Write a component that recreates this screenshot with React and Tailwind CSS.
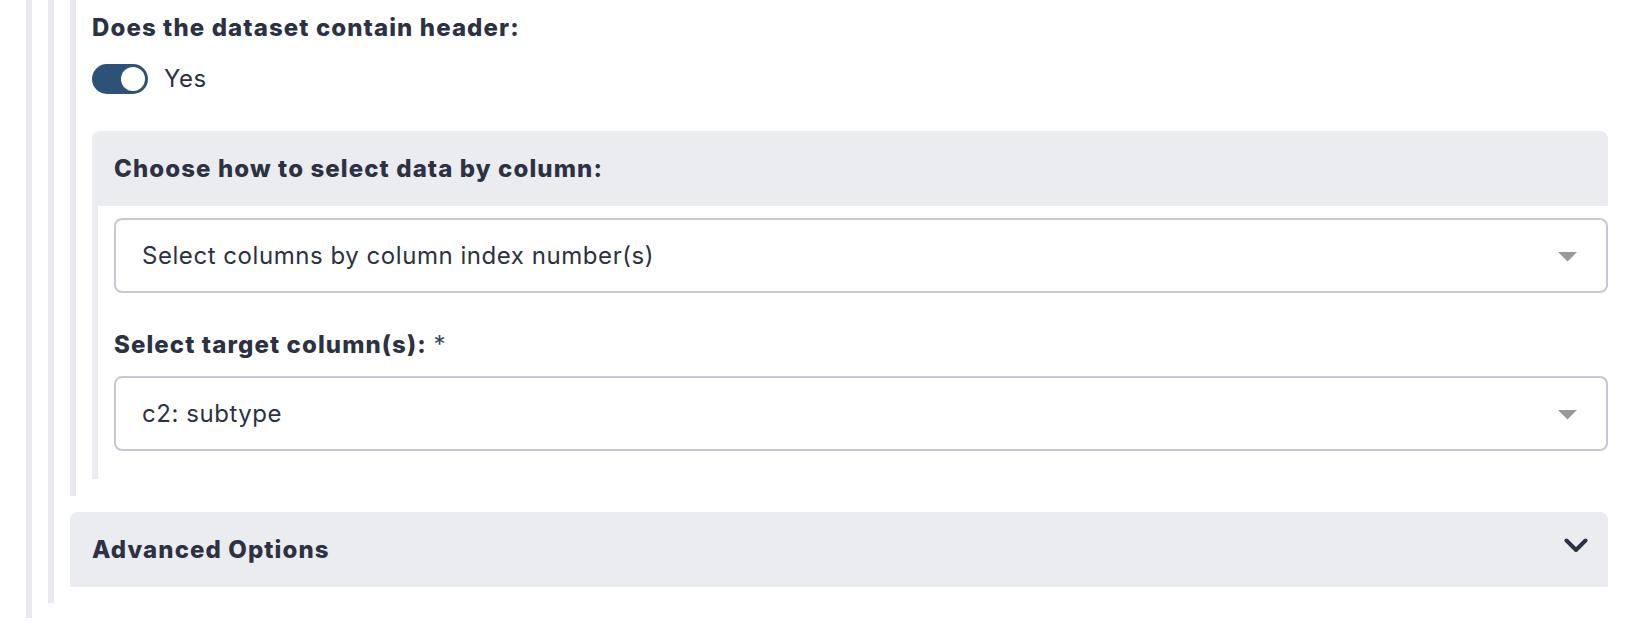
const SelectBox = ({ value }) => (
  <div className="flex h-[75px] items-center justify-between rounded-lg border-2 border-[#c5c9d3] bg-white pl-[26px] pr-[29px]">
    <span className="text-[24px] leading-[30px] tracking-[0.55px]">{value}</span>
    <svg width="19" height="10" viewBox="0 0 19 10" className="mt-[3px]">
      <path d="M0 0 L19 0 L9.5 9.5 Z" fill="#999999" />
    </svg>
  </div>
);

const App = () => {
  return (
    <div className="min-h-screen bg-white font-['Inter',sans-serif] text-[#2c3143]">
      <div className="pl-[26px] pr-[30px]">
        <div className="border-l-[6px] border-[#e8e9ee] pl-4 pb-[15px]">
          <div className="border-l-[6px] border-[#e8e9ee] pl-4 pb-4">
            <div className="border-l-[6px] border-[#e8e9ee] pl-4 pt-[13px] pb-[17px]">
              <div className="text-[24px] font-extrabold leading-[30px] tracking-[1.1px]">Does the dataset contain header:</div>

              <div className="mt-[21px] flex items-center gap-[16px]">
                <div className="relative h-[30px] w-[56px] rounded-full bg-[#2c5278]">
                  <div className="absolute right-[3px] top-[3px] h-[24px] w-[24px] rounded-full bg-white" />
                </div>
                <span className="text-[24px] leading-[30px] tracking-[0.55px]">Yes</span>
              </div>

              <div className="mt-[37px]">
                <div className="flex h-[75px] items-center rounded-t-lg bg-[#ebecf0] px-[22px]">
                  <span className="text-[24px] font-extrabold leading-[30px] tracking-[1.1px]">Choose how to select data by column:</span>
                </div>
                <div className="border-l-[6px] border-[#ebecf0] pl-4 pt-3 pb-[28px]">
                  <SelectBox value="Select columns by column index number(s)" />
                  <div className="mt-[37px] mb-4 text-[24px] leading-[30px]">
                    <span className="font-extrabold tracking-[1.1px]">Select target column(s):</span>{' '}
                    <span className="text-[#3e4456]">*</span>
                  </div>
                  <SelectBox value="c2: subtype" />
                </div>
              </div>
            </div>

            <div className="mt-4 flex h-[75px] items-center justify-between rounded-t-lg bg-[#ebecf0] pl-[22px] pr-[20px]">
              <span className="text-[24px] font-extrabold leading-[30px] tracking-[1.1px]">Advanced Options</span>
              <svg width="24" height="15" viewBox="0 0 24 15" className="-mt-[8px]">
                <polyline points="2.5,2.5 12,12 21.5,2.5" fill="none" stroke="#2c3143" strokeWidth="4" strokeLinecap="round" strokeLinejoin="round" />
              </svg>
            </div>
          </div>
        </div>
      </div>
    </div>
  );
};

export default App;
